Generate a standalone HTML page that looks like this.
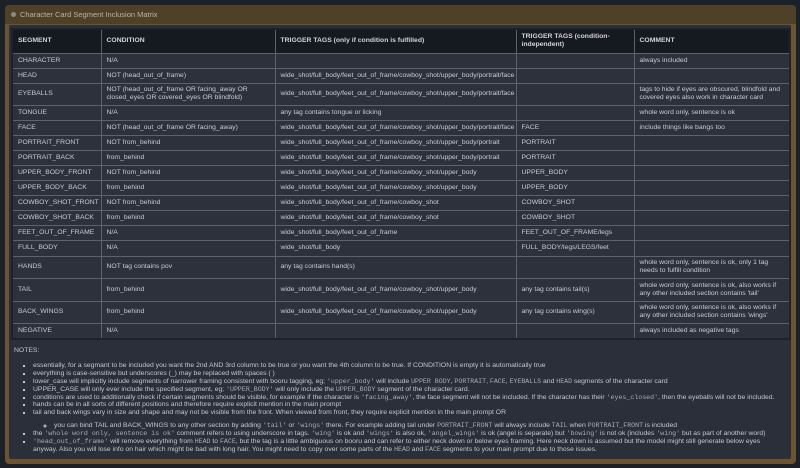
<!DOCTYPE html>
<html><head><meta charset="utf-8"><style>
*{margin:0;padding:0;box-sizing:border-box}
body{width:800px;height:468px;background:#1c2028;font-family:"Liberation Sans",sans-serif;color:#c9ccd2;font-size:7px;overflow:hidden;position:relative}
.panel{position:absolute;left:5px;top:5px;width:791px;height:459px;background:#6b5431;border-radius:4px}
.hdr{position:absolute;left:0;top:0;width:100%;height:19px;background:#4f4128;border-radius:4px 4px 0 0;color:#b9b3a6;font-size:7.5px;line-height:19px;padding-left:15px}
.hdr .dot{position:absolute;left:6px;top:7px;width:5px;height:5px;border-radius:50%;background:#8a8a8e}
.inner{position:absolute;left:4px;top:20px;width:782px;height:434px;background:#2a2f3a;border-radius:2px}
table{position:absolute;left:2px;top:3px;border-collapse:collapse;table-layout:fixed;width:778px;background:#2c313c;border:2px solid #1e222a}
td,th{border:1px solid #5d626c;padding:0 5px;text-align:left;vertical-align:middle;font-size:6.8px;line-height:8px;color:#c9ccd2;white-space:normal}
th{background:#151920;font-weight:bold;color:#d2d4d8;height:24px}
.notes{position:absolute;left:5px;top:322px;width:766px;font-size:6.8px;line-height:7.9px;color:#c4c7cd}
ul{margin-top:7px;padding-left:19px}
li{list-style:square}
ul ul{padding-left:21px;margin:0}
ul ul li{list-style:circle;margin-top:5px}
code{font-family:"Liberation Mono",monospace;font-size:6.6px;color:#a9adb5}
</style></head><body>
<div class="panel">
<div class="hdr"><span class="dot"></span>Character Card Segment Inclusion Matrix</div>
<div class="inner">
<table>
<colgroup><col style="width:89px"><col style="width:174px"><col style="width:241px"><col style="width:118px"><col style="width:156px"></colgroup>
<tr><th>SEGMENT</th><th>CONDITION</th><th>TRIGGER TAGS (only if condition is fulfilled)</th><th>TRIGGER TAGS (condition-independent)</th><th>COMMENT</th></tr>
<tr style="height:15px"><td>CHARACTER</td><td>N/A</td><td></td><td></td><td>always included</td></tr>
<tr style="height:15px"><td>HEAD</td><td>NOT (head_out_of_frame)</td><td>wide_shot/full_body/feet_out_of_frame/cowboy_shot/upper_body/portrait/face</td><td></td><td></td></tr>
<tr style="height:22px"><td>EYEBALLS</td><td>NOT (head_out_of_frame OR facing_away OR closed_eyes OR covered_eyes OR blindfold)</td><td>wide_shot/full_body/feet_out_of_frame/cowboy_shot/upper_body/portrait/face</td><td></td><td>tags to hide if eyes are obscured, blindfold and covered eyes also work in character card</td></tr>
<tr style="height:15px"><td>TONGUE</td><td>N/A</td><td>any tag contains tongue or licking</td><td></td><td>whole word only, sentence is ok</td></tr>
<tr style="height:15px"><td>FACE</td><td>NOT (head_out_of_frame OR facing_away)</td><td>wide_shot/full_body/feet_out_of_frame/cowboy_shot/upper_body/portrait/face</td><td>FACE</td><td>include things like bangs too</td></tr>
<tr style="height:15px"><td>PORTRAIT_FRONT</td><td>NOT from_behind</td><td>wide_shot/full_body/feet_out_of_frame/cowboy_shot/upper_body/portrait</td><td>PORTRAIT</td><td></td></tr>
<tr style="height:15px"><td>PORTRAIT_BACK</td><td>from_behind</td><td>wide_shot/full_body/feet_out_of_frame/cowboy_shot/upper_body/portrait</td><td>PORTRAIT</td><td></td></tr>
<tr style="height:15px"><td>UPPER_BODY_FRONT</td><td>NOT from_behind</td><td>wide_shot/full_body/feet_out_of_frame/cowboy_shot/upper_body</td><td>UPPER_BODY</td><td></td></tr>
<tr style="height:15px"><td>UPPER_BODY_BACK</td><td>from_behind</td><td>wide_shot/full_body/feet_out_of_frame/cowboy_shot/upper_body</td><td>UPPER_BODY</td><td></td></tr>
<tr style="height:15px"><td>COWBOY_SHOT_FRONT</td><td>NOT from_behind</td><td>wide_shot/full_body/feet_out_of_frame/cowboy_shot</td><td>COWBOY_SHOT</td><td></td></tr>
<tr style="height:15px"><td>COWBOY_SHOT_BACK</td><td>from_behind</td><td>wide_shot/full_body/feet_out_of_frame/cowboy_shot</td><td>COWBOY_SHOT</td><td></td></tr>
<tr style="height:15px"><td>FEET_OUT_OF_FRAME</td><td>N/A</td><td>wide_shot/full_body/feet_out_of_frame</td><td>FEET_OUT_OF_FRAME/legs</td><td></td></tr>
<tr style="height:16px"><td>FULL_BODY</td><td>N/A</td><td>wide_shot/full_body</td><td>FULL_BODY/legs/LEGS/feet</td><td></td></tr>
<tr style="height:22px"><td>HANDS</td><td>NOT tag contains pov</td><td>any tag contains hand(s)</td><td></td><td>whole word only, sentence is ok, only 1 tag needs to fulfill condition</td></tr>
<tr style="height:23px"><td>TAIL</td><td>from_behind</td><td>wide_shot/full_body/feet_out_of_frame/cowboy_shot/upper_body</td><td>any tag contains tail(s)</td><td>whole word only, sentence is ok, also works if any other included section contains 'tail'</td></tr>
<tr style="height:22px"><td>BACK_WINGS</td><td>from_behind</td><td>wide_shot/full_body/feet_out_of_frame/cowboy_shot/upper_body</td><td>any tag contains wing(s)</td><td>whole word only, sentence is ok, also works if any other included section contains 'wings'</td></tr>
<tr style="height:16px"><td>NEGATIVE</td><td>N/A</td><td></td><td></td><td>always included as negative tags</td></tr>
</table>
<div class="notes">NOTES:
<ul>
<li>essentially, for a segmant to be included you want the 2nd AND 3rd column to be true or you want the 4th column to be true. If CONDITION is empty it is automatically true</li>
<li>everything is case-sensitive but underscores (_) may be replaced with spaces ( )</li>
<li>lower_case will implicitly include segments of narrower framing consistent with booru tagging, eg; <code>'upper_body'</code> will include <code>UPPER BODY</code>, <code>PORTRAIT</code>, <code>FACE</code>, <code>EYEBALLS</code> and <code>HEAD</code> segments of the character card</li>
<li>UPPER_CASE will only ever include the specified segment, eg; <code>'UPPER_BODY'</code> will only include the <code>UPPER_BODY</code> segment of the character card.</li>
<li>conditions are used to additionally check if certain segments should be visible, for example if the character is <code>'facing_away'</code>, the face segment will not be included. If the character has their <code>'eyes_closed'</code>, then the eyeballs will not be included.</li>
<li>hands can be in all sorts of different positions and therefore require explicit mention in the main prompt</li>
<li>tail and back wings vary in size and shape and may not be visible from the front. When viewed from front, they require explicit mention in the main prompt OR
<ul><li>you can bind TAIL and BACK_WINGS to any other section by adding <code>'tail'</code> or <code>'wings'</code> there. For example adding tail under <code>PORTRAIT_FRONT</code> will always include <code>TAIL</code> when <code>PORTRAIT_FRONT</code> is included</li></ul></li>
<li>the <code>'whole word only, sentence is ok'</code> comment refers to using underscore in tags. <code>'wing'</code> is ok and <code>'wings'</code> is also ok, <code>'angel_wings'</code> is ok (angel is separate) but <code>'bowing'</code> is not ok (includes <code>'wing'</code> but as part of another word)</li>
<li><code>'head_out_of_frame'</code> will remove everything from <code>HEAD</code> to <code>FACE</code>, but the tag is a little ambiguous on booru and can refer to either neck down or below eyes framing. Here neck down is assumed but the model might still generate below eyes anyway. Also you will lose info on hair which might be bad with long hair. You might need to copy over some parts of the <code>HEAD</code> and <code>FACE</code> segments to your main prompt due to those issues.</li>
</ul></div>
</div></div>
</body></html>
